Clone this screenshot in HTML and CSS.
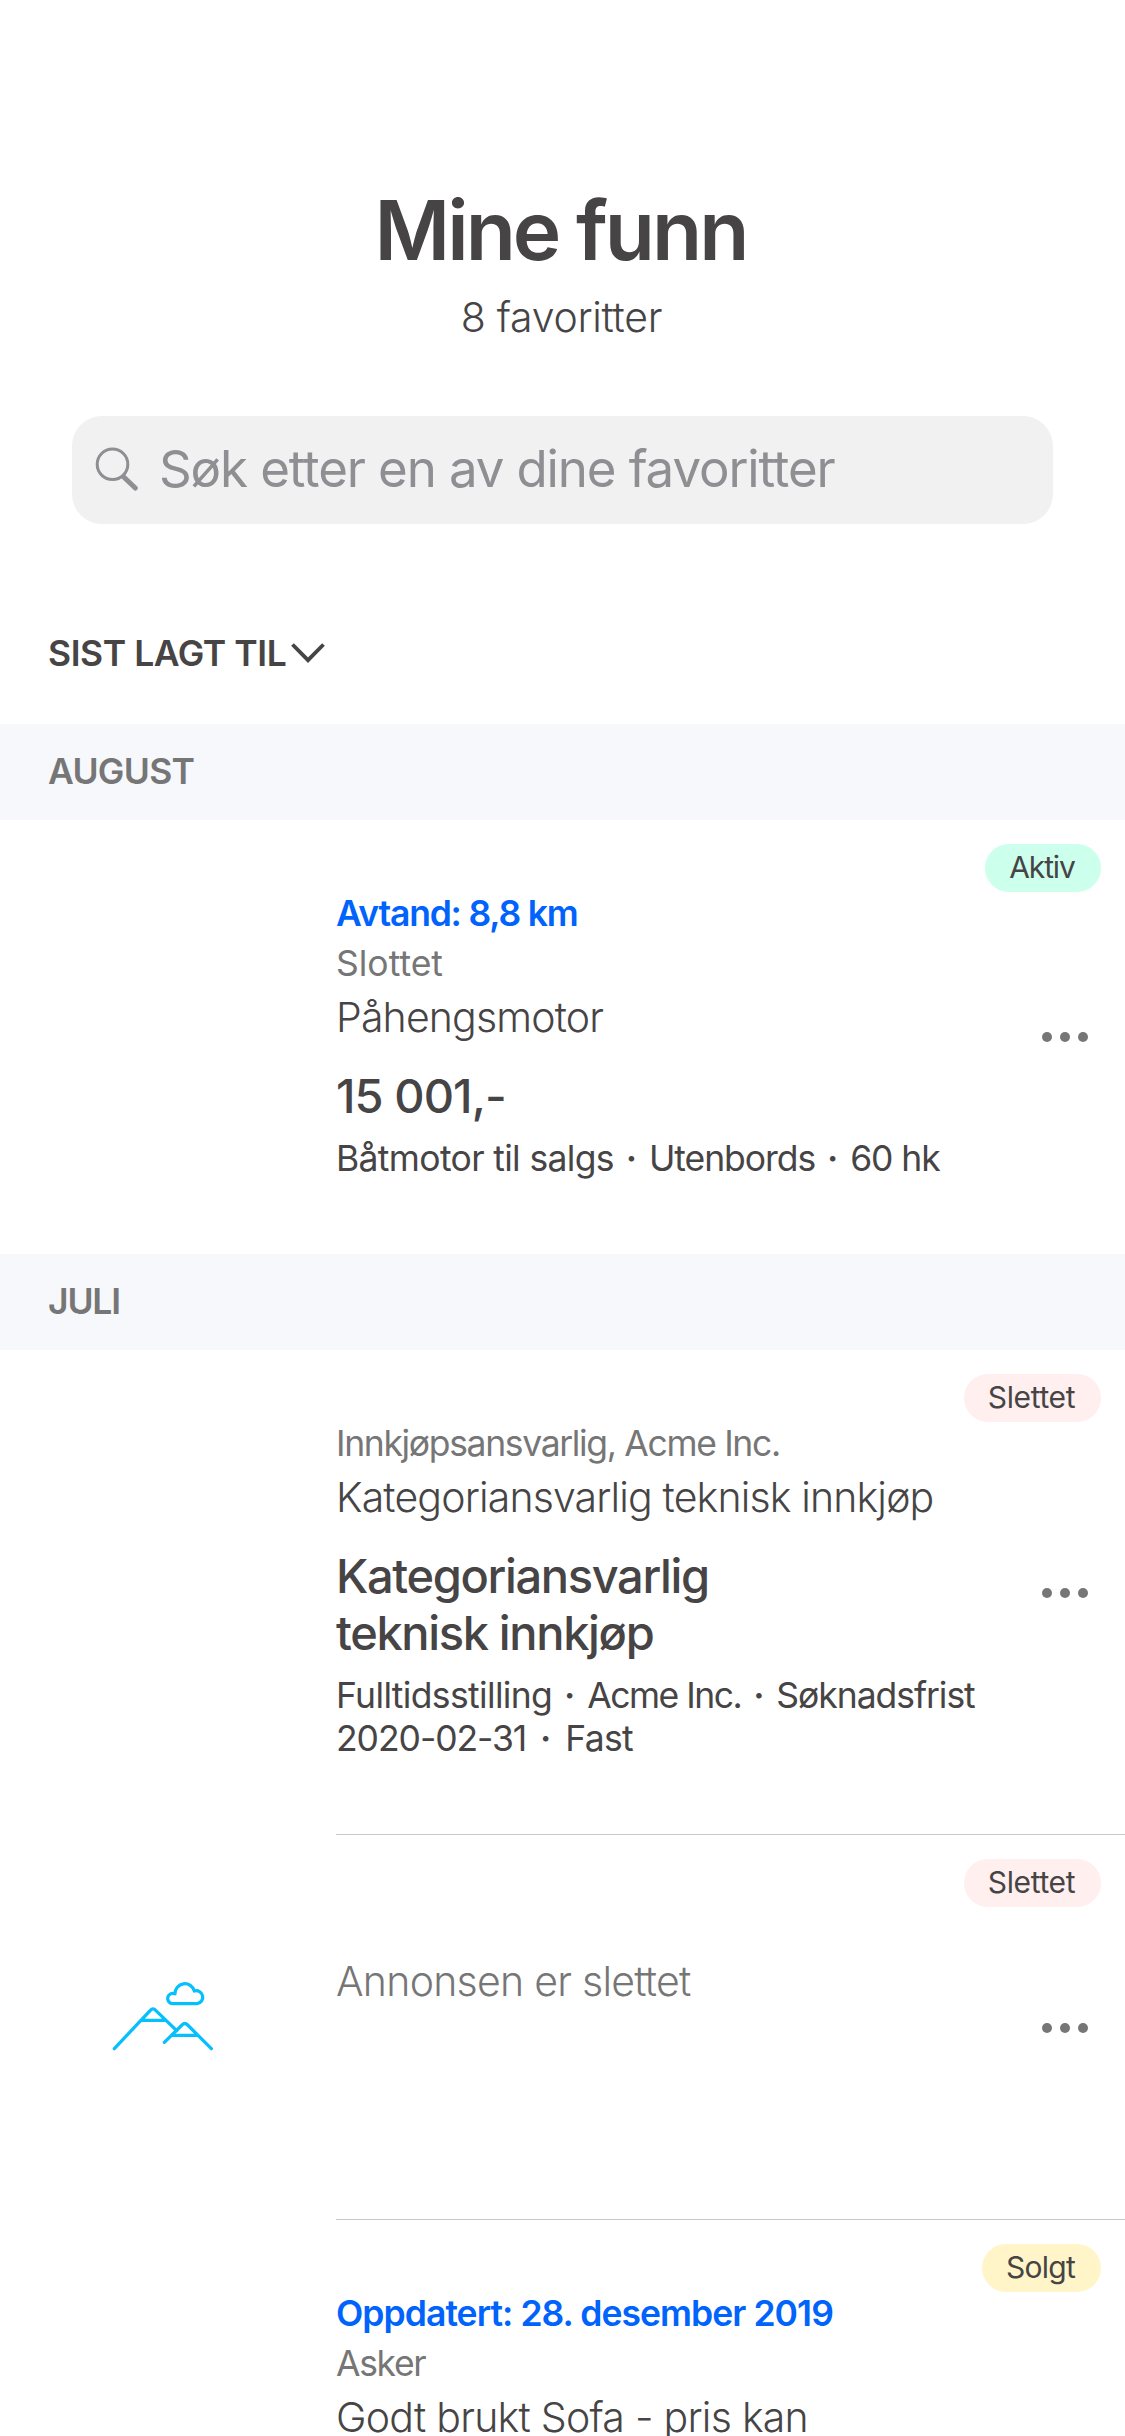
FILE: index.html
```html
<!DOCTYPE html>
<html lang="nb">
<head>
<meta charset="utf-8">
<title>Mine funn</title>
<link rel="stylesheet" href="styles.css">
</head>
<body>
<header class="header">
  <h1 class="title">Mine funn</h1>
  <p class="subtitle">8 favoritter</p>
  <div class="search">
    <svg class="search-icon" viewBox="0 0 44 44"><circle cx="17.5" cy="17.3" r="15.3"/><path d="M29 30.2 40.3 41"/></svg>
    <span class="search-text">Søk etter en av dine favoritter</span>
  </div>
  <div class="sort">
    <span>SIST LAGT TIL</span>
    <svg class="chevron" viewBox="0 0 36 22"><path d="M2.5 2.5 18 18.2 33.5 2.5"/></svg>
  </div>
</header>

<main>
  <h2 class="month month-wide">AUGUST</h2>
  <article class="ad">
    <div class="thumb"></div>
    <div class="info">
      <p class="status">Avtand: 8,8 km</p>
      <p class="place place-short">Slottet</p>
      <p class="name">Påhengsmotor</p>
      <p class="price">15 001,-</p>
      <p class="details"><span class="d-loose">Båtmotor til salgs</span><span class="sep">·</span><span>Utenbords</span><span class="sep">·</span><span>60 hk</span></p>
    </div>
    <div class="more"><i></i><i></i><i></i></div>
    <span class="badge badge-active">Aktiv</span>
  </article>

  <h2 class="month">JULI</h2>
  <article class="ad">
    <div class="thumb"></div>
    <div class="info">
      <p class="place">Innkjøpsansvarlig, Acme Inc.</p>
      <p class="name">Kategoriansvarlig teknisk innkjøp</p>
      <p class="price price-text">Kategoriansvarlig<br>teknisk innkjøp</p>
      <p class="details"><span class="d-loose">Fulltidsstilling</span><span class="sep">·</span><span class="d-tight">Acme Inc.</span><span class="sep">·</span><span>Søknadsfrist</span><br><span>2020-02-31</span><span class="sep sep-wide">·</span><span class="d-loose">Fast</span></p>
    </div>
    <div class="more"><i></i><i></i><i></i></div>
    <span class="badge badge-deleted">Slettet</span>
  </article>
  <article class="ad ad-deleted">
    <div class="thumb">
      <svg class="mountains" viewBox="66 60 306 216">
        <path d="M73 266 181 151Q189 142 197 151L260 212M153 181H226"/>
        <path d="M223 247 276 195Q284 186 293 195L364 266M247 226H320"/>
        <path d="M249 131A15.500 15.500 0 1 1 255 101.500A29.500 29.500 0 0 1 313 93A19.500 19.500 0 1 1 321 131Z"/>
      </svg>
    </div>
    <div class="info"><p class="name">Annonsen er slettet</p></div>
    <div class="more"><i></i><i></i><i></i></div>
    <span class="badge badge-deleted">Slettet</span>
  </article>
  <article class="ad ad-last">
    <div class="thumb"></div>
    <div class="info">
      <p class="status status-long">Oppdatert: 28. desember 2019</p>
      <p class="place">Asker</p>
      <p class="name">Godt brukt Sofa - pris kan</p>
    </div>
    <span class="badge badge-sold">Solgt</span>
  </article>
</main>
</body>
</html>
```
FILE: styles.css
```css
* { box-sizing: border-box; }
body, h1, h2, p { margin: 0; }
body {
  width: 1125px;
  height: 2436px;
  overflow: hidden;
  background: #fff;
  color: #464445;
  font-family: Inter, "Liberation Sans", sans-serif;
  font-size: 35.5px;
}
svg { display: block; fill: none; flex: none; }

.header { height: 724px; padding-top: 181px; }
.title {
  padding-right: 4px;
  font-size: 82px;
  font-weight: 600;
  line-height: 100px;
  letter-spacing: -3px;
  text-align: center;
}
.subtitle {
  margin-top: 11px;
  padding-right: 2px;
  font-size: 41px;
  font-weight: 300;
  line-height: 50px;
  letter-spacing: -.27px;
  text-align: center;
}
.search {
  display: flex;
  align-items: center;
  height: 108px;
  margin: 74px 72px 0;
  padding-left: 23px;
  gap: 20px;
  border-radius: 30px;
  background: #f1f1f1;
}
.search-icon { width: 44px; height: 44px; margin-bottom: 2px; stroke: #8e8e93; stroke-width: 3; stroke-linecap: round; }
.search-icon path { stroke-width: 5; }
.search-text { font-size: 51px; line-height: 60px; letter-spacing: -1.12px; color: #8e8e93; padding-bottom: 3px; }
.sort {
  display: flex;
  align-items: center;
  gap: 4px;
  margin: 105px 0 0 48px;
  height: 48px;
  font-weight: 600;
  letter-spacing: -.45px;
}
.chevron { width: 36px; height: 22px; stroke: #464445; stroke-width: 3.8; }

.month {
  display: flex;
  align-items: center;
  height: 96px;
  padding: 0 48px 2px;
  background: #f6f8fc;
  color: #767676;
  font-size: 35.5px;
  font-weight: 600;
  letter-spacing: -1.2px;
}
.month-wide { letter-spacing: -.7px; }

.ad {
  position: relative;
  display: grid;
  grid-template-columns: 336px 1fr 84px;
}
.ad + .ad::before {
  content: "";
  position: absolute;
  top: -1px;
  left: 336px;
  right: 0;
  height: 1px;
  background: #c8c8c8;
}
.month + .ad { height: 434px; }
.month:not(.month-wide) + .ad { height: 485px; }
.ad-deleted { height: 385px; }
.info { padding-top: 69px; white-space: nowrap; }
.ad-deleted .info { padding-top: 118px; }
.status { line-height: 50px; font-weight: 600; letter-spacing: -1.2px; color: #0063fb; }
.status-long { letter-spacing: -.95px; }
.place { line-height: 50px; letter-spacing: -1.34px; color: #767676; }
.place-short { letter-spacing: 0; }
.name { line-height: 56px; font-size: 41px; font-weight: 300; letter-spacing: -.84px; }
.ad-deleted .name, .ad-last .name { letter-spacing: -.74px; }
.ad-deleted .name { color: #767676; }
.price { margin-top: 22px; line-height: 57px; font-size: 47px; font-weight: 500; letter-spacing: -.93px; }
.price-text { letter-spacing: -1.35px; }
.details { margin-top: 13px; line-height: 43px; letter-spacing: -1.05px; }
.d-loose { letter-spacing: -.65px; }
.d-tight { letter-spacing: -1.5px; }
.sep { display: inline-block; width: 35px; text-align: center; font-weight: 600; letter-spacing: 0; }
.sep-wide { width: 39px; }

.more { display: flex; align-items: center; gap: 8px; padding-left: 1px; }
.more i { width: 10px; height: 10px; border-radius: 50%; background: #767676; }

.badge {
  position: absolute;
  top: 24px;
  right: 24px;
  height: 48px;
  padding-right: 2px;
  border-radius: 24px;
  line-height: 46px;
  font-size: 30px;
  text-align: center;
}
.badge-active { width: 116px; background: #ccffec; letter-spacing: -1.1px; }
.badge-deleted { width: 137px; background: #ffefef; letter-spacing: -.35px; }
.badge-sold { width: 119px; background: #fff5c8; letter-spacing: -.7px; }

.thumb { padding: 145px 0 0 112px; }
.mountains { width: 102px; height: 72px; stroke: #06bffd; stroke-width: 9.8; stroke-linecap: round; stroke-linejoin: round; }
```
